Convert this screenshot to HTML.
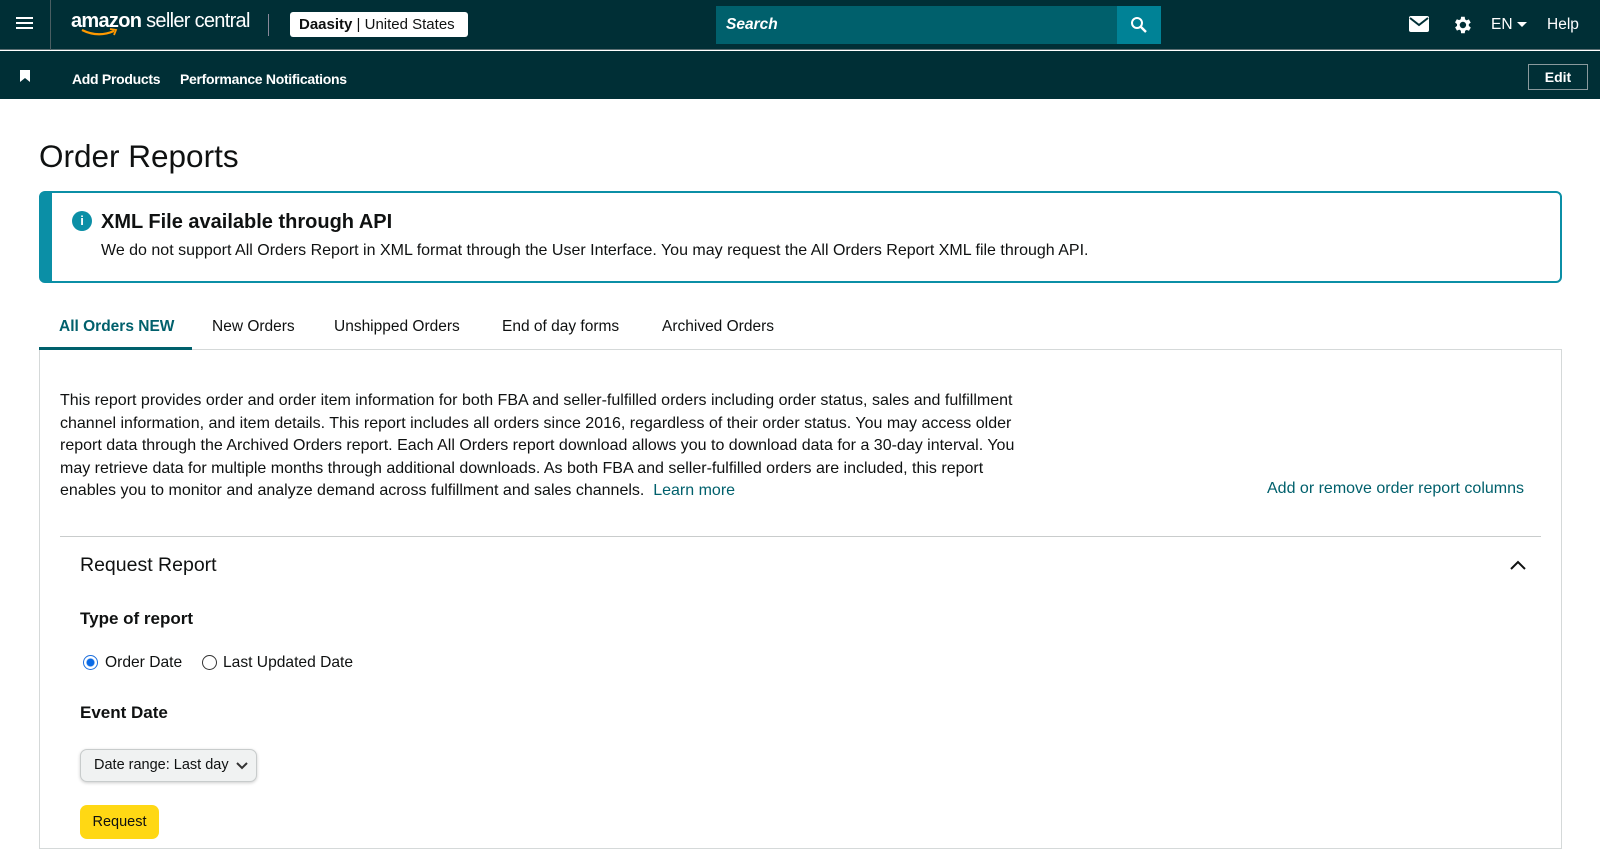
<!DOCTYPE html>
<html><head><style>
*{box-sizing:border-box;margin:0;padding:0}
body{width:1600px;height:844px;overflow:hidden;background:#fff;font-family:"Liberation Sans",sans-serif;color:#0f1111;position:relative}
.a{position:absolute}
.top{left:0;top:0;width:1600px;height:50px;background:#002f36;border-bottom:1px solid #5a6e72}
.sub{left:0;top:51px;width:1600px;height:48px;background:#002f36}
.w{color:#fff}
.t{font-size:15.5px}
</style></head><body>
<div class="a top"></div>
<div class="a sub"></div>
<div class="a" style="left:50px;top:0;width:1px;height:50px;background:#4a5e62"></div>
<div class="a" style="left:16px;top:17px;width:17px;height:2px;background:#fff;box-shadow:0 5px 0 #fff,0 10px 0 #fff"></div>
<div class="a w" style="left:71px;top:10px;font-size:20px;letter-spacing:-0.7px"><b>amazon</b> seller central</div>
<svg class="a" style="left:80px;top:27px" width="40" height="10"><path d="M2 3 Q18 11 34 4" stroke="#f90" stroke-width="2.2" fill="none"/><path d="M30 2 L36 3 L34 8" stroke="#f90" stroke-width="1.8" fill="none"/></svg>
<div class="a" style="left:268px;top:14px;width:1px;height:22px;background:#889"></div>
<div class="a" style="left:290px;top:12px;width:178px;height:25px;background:#fff;border-radius:3px;font-size:15px;line-height:25px;padding-left:9px"><b>Daasity</b> | United States</div>
<div class="a" style="left:716px;top:6px;width:401px;height:38px;background:#00606c;color:#fff;font-style:italic;font-size:15.5px;font-weight:bold;line-height:38px;padding-left:10px">Search</div>
<div class="a" style="left:1117px;top:6px;width:44px;height:38px;background:#008296"></div>
<svg class="a" style="left:1130px;top:16px" width="18" height="18"><circle cx="7" cy="7" r="5" stroke="#fff" stroke-width="2" fill="none"/><path d="M11 11 L16 16" stroke="#fff" stroke-width="2.4"/></svg>
<svg class="a" style="left:1409px;top:16px" width="20" height="16"><rect width="20" height="16" rx="2" fill="#fff"/><path d="M1 2 L10 9 L19 2" stroke="#002f36" stroke-width="2" fill="none"/></svg>
<svg class="a" style="left:1451px;top:14px" width="22" height="22" viewBox="0 0 24 24"><path fill="#fff" d="M19.4 13a7.5 7.5 0 0 0 0-2l2.1-1.6-2-3.5-2.5 1a7.6 7.6 0 0 0-1.7-1L15 3h-4l-.4 2.7a7.6 7.6 0 0 0-1.7 1l-2.5-1-2 3.5L6.6 11a7.5 7.5 0 0 0 0 2l-2.1 1.6 2 3.5 2.5-1a7.6 7.6 0 0 0 1.7 1L11 21h4l.4-2.7a7.6 7.6 0 0 0 1.7-1l2.5 1 2-3.5zM13 15.5a3.5 3.5 0 1 1 0-7 3.5 3.5 0 0 1 0 7z"/></svg>
<div class="a w" style="left:1491px;top:16px;font-size:15.5px">EN</div>
<div class="a" style="left:1517px;top:22px;border:5px solid transparent;border-top:5px solid #fff"></div>
<div class="a w" style="left:1547px;top:16px;font-size:15.5px">Help</div>
<svg class="a" style="left:20px;top:70px" width="10" height="12"><path d="M0 0 H10 V12 L5 8 L0 12Z" fill="#fff"/></svg>
<div class="a w" style="left:72px;top:71px;font-size:14px;font-weight:bold;letter-spacing:-0.3px">Add Products</div>
<div class="a w" style="left:180px;top:71px;font-size:14px;font-weight:bold;letter-spacing:-0.3px">Performance Notifications</div>
<div class="a w" style="left:1528px;top:64px;width:60px;height:26px;border:1px solid #8a9a9d;font-size:14px;font-weight:bold;text-align:center;line-height:24px">Edit</div>

<div class="a" style="left:39px;top:138px;font-size:31.5px">Order Reports</div>
<div class="a" style="left:39px;top:191px;width:1523px;height:92px;border:2px solid #0b8fa6;border-left:13px solid #0b8fa6;border-radius:6px"></div>
<div class="a" style="left:72px;top:211px;width:20px;height:20px;border-radius:50%;background:#0b8fa6;color:#fff;font-size:13px;font-weight:bold;text-align:center;line-height:20px">i</div>
<div class="a" style="left:101px;top:211px;font-size:20px;font-weight:bold">XML File available through API</div>
<div class="a" style="left:101px;top:242px;font-size:16px">We do not support All Orders Report in XML format through the User Interface. You may request the All Orders Report XML file through API.</div>

<div class="a t" style="left:59px;top:318px;font-weight:bold;color:#00606c">All Orders NEW</div>
<div class="a t" style="left:212px;top:318px">New Orders</div>
<div class="a t" style="left:334px;top:318px">Unshipped Orders</div>
<div class="a t" style="left:502px;top:318px">End of day forms</div>
<div class="a t" style="left:662px;top:318px">Archived Orders</div>
<div class="a" style="left:39px;top:349px;width:1523px;height:500px;border:1px solid #d5d9d9"></div>
<div class="a" style="left:39px;top:347px;width:153px;height:3px;background:#00606c"></div>

<div class="a" style="left:60px;top:390px;width:975px;font-size:16px;line-height:22.5px">This report provides order and order item information for both FBA and seller-fulfilled orders including order status, sales and fulfillment channel information, and item details. This report includes all orders since 2016, regardless of their order status. You may access older report data through the Archived Orders report. Each All Orders report download allows you to download data for a 30-day interval. You may retrieve data for multiple months through additional downloads. As both FBA and seller-fulfilled orders are included, this report enables you to monitor and analyze demand across fulfillment and sales channels. &nbsp;<span style="color:#00606c">Learn more</span></div>
<div class="a" style="left:1267px;top:480px;font-size:16px;color:#00606c">Add or remove order report columns</div>
<div class="a" style="left:60px;top:536px;width:1481px;height:1px;background:#c9cccc"></div>
<div class="a" style="left:80px;top:554px;font-size:19.5px">Request Report</div>
<svg class="a" style="left:1509px;top:559px" width="18" height="12"><path d="M2 10 L9 3 L16 10" stroke="#0f1111" stroke-width="2" fill="none"/></svg>
<div class="a" style="left:80px;top:609px;font-size:17px;font-weight:bold">Type of report</div>
<div class="a" style="left:83px;top:655px;width:15px;height:15px;border-radius:50%;border:1.5px solid #1e6fdc;background:radial-gradient(circle,#0a6ae6 3.5px,#fff 4.5px)"></div>
<div class="a t" style="left:105px;top:654px;font-size:15.6px">Order Date</div>
<div class="a" style="left:202px;top:655px;width:15px;height:15px;border-radius:50%;border:1px solid #333"></div>
<div class="a t" style="left:223px;top:654px;font-size:15.6px">Last Updated Date</div>
<div class="a" style="left:80px;top:703px;font-size:17px;font-weight:bold">Event Date</div>
<div class="a" style="left:80px;top:749px;width:177px;height:33px;background:#f0f2f2;border:1px solid #c8cccc;border-radius:7px;box-shadow:0 1px 3px rgba(0,0,0,.2);font-size:14.5px;line-height:31px;padding-left:13px">Date range: Last day</div>
<svg class="a" style="left:236px;top:762px" width="12" height="8"><path d="M1 1 L6 6 L11 1" stroke="#333" stroke-width="2" fill="none"/></svg>
<div class="a" style="left:80px;top:805px;width:79px;height:34px;background:#ffd814;border-radius:7px;font-size:14.5px;line-height:34px;text-align:center">Request</div>
</body></html>
